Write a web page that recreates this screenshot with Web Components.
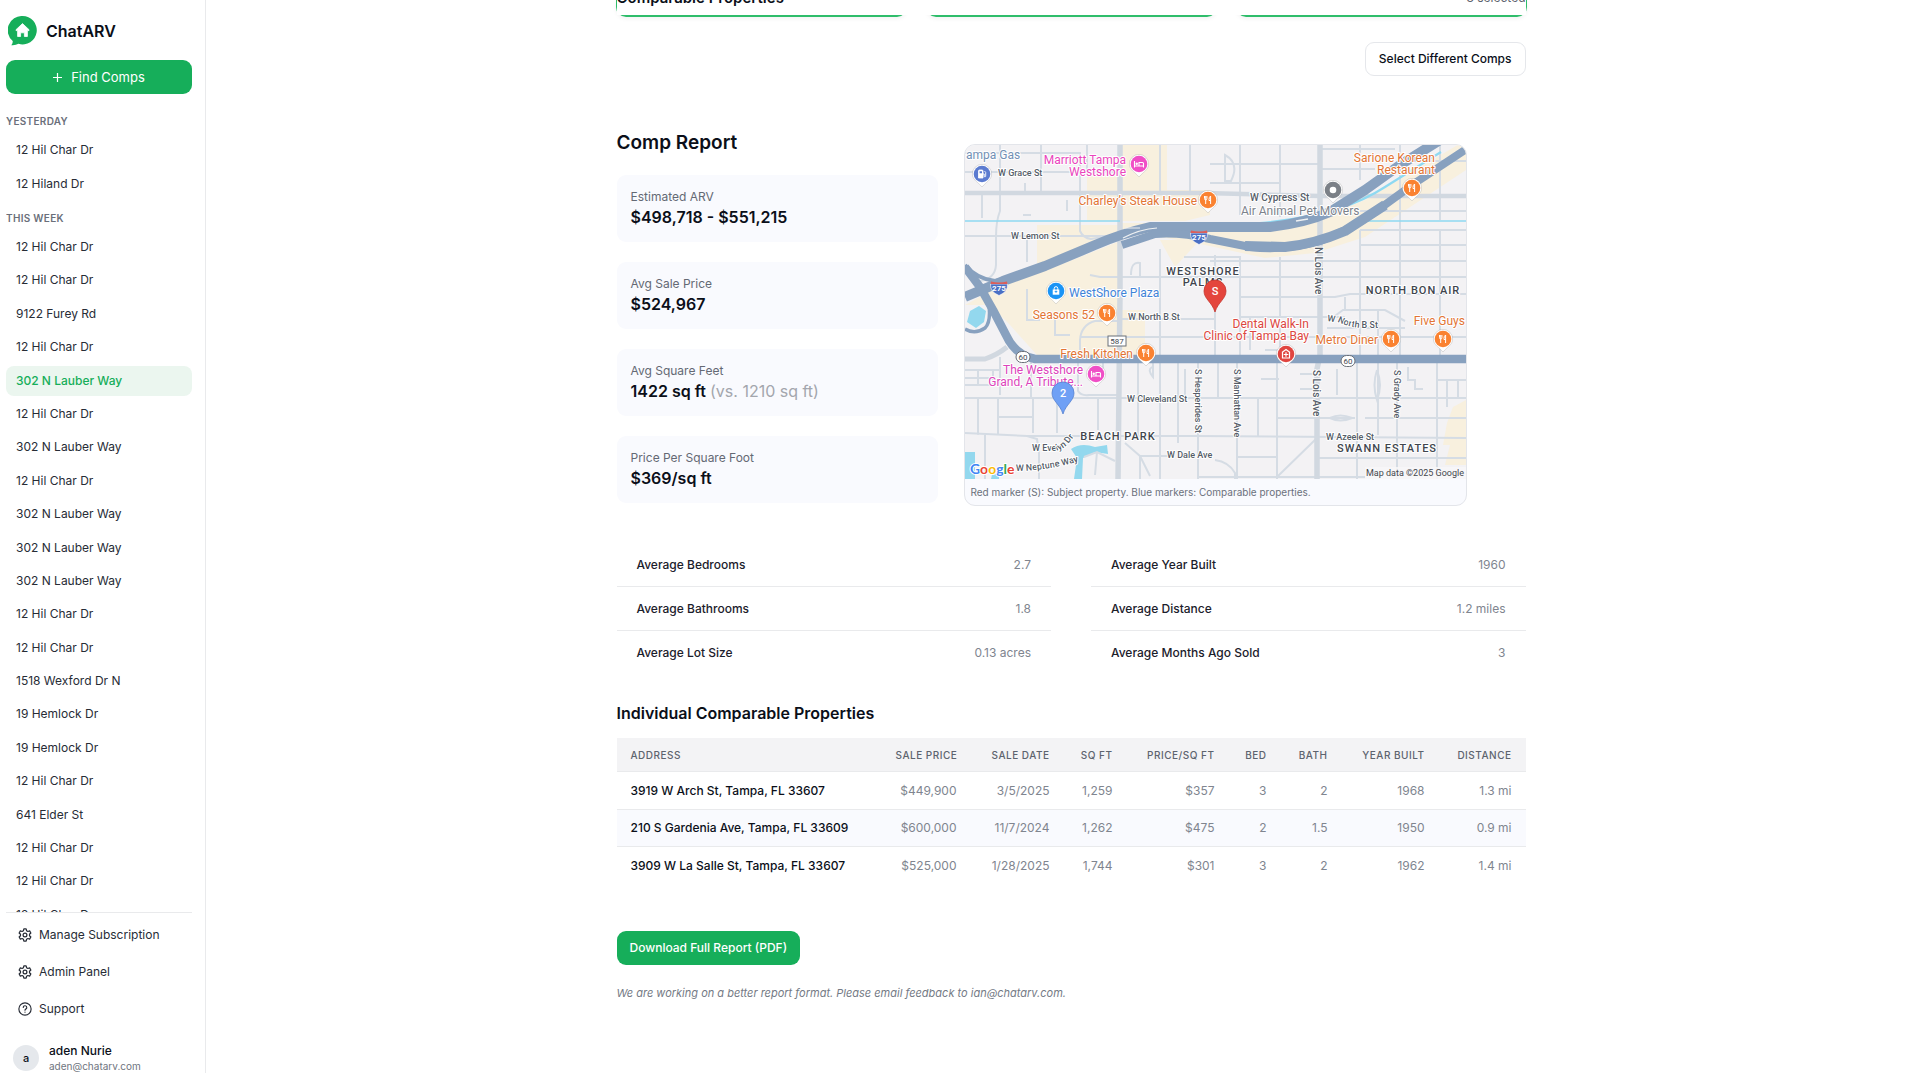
<!DOCTYPE html>
<html lang="en">
<head>
<meta charset="utf-8">
<title>ChatARV</title>
<style>
  html, body { height: 100%; margin: 0; }
  body {
    font-family: Inter, "Liberation Sans", sans-serif;
    font-size: 12px; line-height: 16px; color: #0b0f19; background: #fff;
    --green: #16ae5a; --line: #e9eaec; --muted: #80858f; --soft: #f9fafe; --ink: #272c36;
  }
</style>
</head>
<body>
<chat-app></chat-app>
<script>
const define = (name, html, ready) => {
  const tpl = document.createElement('template');
  tpl.innerHTML = '<style>*{box-sizing:border-box}button{font:inherit;cursor:pointer}a{color:inherit;text-decoration:none}</style>' + html;
  customElements.define(name, class extends HTMLElement {
    constructor() {
      super();
      this.attachShadow({ mode: 'open' }).append(tpl.content.cloneNode(true));
    }
    connectedCallback() { if (ready) ready.call(this, this.shadowRoot); }
  });
};

/* ---------- sidebar ---------- */
define('brand-logo', `
<style>
  :host { display: flex; align-items: center; gap: 9px; padding: 0 2px; height: 30px; font-size: 16px; line-height: 24px; font-weight: 600; }
  svg { width: 29px; height: 30px; flex: none; }
</style>
<svg viewBox="0 0 29 30" aria-hidden="true">
  <path d="M14.500 0A14.200 14.200 0 1 1 10.500 27.800Q7.500 29.600 3.300 29.200Q5 27.300 4.700 25A14.200 14.200 0 0 1 14.500 0Z" fill="#16ae5a"/>
  <path d="M14.500 7.600 21 13.700V14.600H19.400V20.500H16.400V16.800H12.600V20.500H9.600V14.600H8V13.700Z" fill="#fff" stroke="#fff" stroke-width=".8" stroke-linejoin="round"/>
</svg>
<slot></slot>`);

define('nav-group', `
<style>
  :host { display: block; }
  h2 { margin: 0; font-size: 10px; line-height: 16px; font-weight: 600; letter-spacing: .3px; color: #6a6f7a; text-transform: uppercase; }
  ul { list-style: none; margin: 6px 0 0; padding: 0; display: flex; flex-direction: column; justify-content: space-between; height: var(--list-height); }
  a { display: block; padding: 7px 10px; height: 30px; border-radius: 8px; color: var(--ink); }
  a[aria-current] { background: #ebf6ef; color: var(--green); font-weight: 500; }
</style>
<h2></h2><ul></ul>`, function (root) {
  root.querySelector('h2').textContent = this.getAttribute('heading');
  const ul = root.querySelector('ul');
  this.getAttribute('items').split('|').forEach(t => {
    const li = document.createElement('li'), a = document.createElement('a');
    a.href = '#';
    a.textContent = t.replace('*', '');
    if (t.startsWith('*')) a.setAttribute('aria-current', 'page');
    li.append(a); ul.append(li);
  });
});

define('footer-link', `
<style>
  :host { display: block; }
  a { display: flex; align-items: center; gap: 7px; height: 32px; padding: 0 12px; color: var(--ink); }
  ::slotted(svg) { width: 14px; height: 14px; flex: none; }
</style>
<a href="#"><slot name="icon"></slot><span><slot></slot></span></a>`);

const gear = `<svg slot="icon" viewBox="1 1 22 22" fill="none" stroke="currentColor" stroke-width="1.900" stroke-linecap="round" stroke-linejoin="round" aria-hidden="true"><path d="M10.200 2.500H13.800L14.500 5.300 16.500 6.500 19.300 5.600 21.200 8.800 19.100 10.900V13.100L21.200 15.200 19.300 18.400 16.500 17.500 14.500 18.700 13.800 21.500H10.200L9.500 18.700 7.500 17.500 4.700 18.400 2.800 15.200 4.900 13.100V10.900L2.800 8.800 4.700 5.600 7.500 6.500 9.500 5.300Z"/><circle cx="12" cy="12" r="3"/></svg>`;

define('app-sidebar', `
<style>
  :host { display: flex; flex-direction: column; width: 206px; flex: none; height: 100%; border-right: 1px solid var(--line); padding: 16px 13px 0 6px; }
  .new { margin-top: 14px; height: 34px; flex: none; border: 0; border-radius: 9px; background: var(--green); color: #fff; font-size: 13px; display: flex; align-items: center; justify-content: center; gap: 9px; padding: 0; }
  .new svg { width: 9px; height: 9px; }
  nav { flex: 1; min-height: 0; overflow: hidden; padding-top: 19px; display: flex; flex-direction: column; gap: 11px; }
  nav-group { flex: none; }
  .foot { border-top: 1px solid var(--line); padding-top: 6px; display: flex; flex-direction: column; gap: 5px; }
  .user { display: flex; align-items: center; gap: 10px; padding: 13px 7px 0; height: 43px; }
  .avatar { width: 26px; height: 26px; border-radius: 50%; background: #e5e8ec; display: grid; place-items: center; font-size: 11px; font-weight: 500; }
  .who { display: flex; flex-direction: column; }
  .who b { font-weight: 500; line-height: 16px; }
  .who span { font-size: 10px; line-height: 14px; color: #6f7580; }
</style>
<brand-logo>ChatARV</brand-logo>
<button class="new"><svg viewBox="0 0 9 9" stroke="#fff" stroke-width="1.200" aria-hidden="true"><path d="M4.500 0V9M0 4.500H9"/></svg>Find Comps</button>
<nav aria-label="History">
  <nav-group style="--list-height:64px" heading="Yesterday" items="12 Hil Char Dr|12 Hiland Dr"></nav-group>
  <nav-group style="--list-height:698px" heading="This week" items="12 Hil Char Dr|12 Hil Char Dr|9122 Furey Rd|12 Hil Char Dr|*302 N Lauber Way|12 Hil Char Dr|302 N Lauber Way|12 Hil Char Dr|302 N Lauber Way|302 N Lauber Way|302 N Lauber Way|12 Hil Char Dr|12 Hil Char Dr|1518 Wexford Dr N|19 Hemlock Dr|19 Hemlock Dr|12 Hil Char Dr|641 Elder St|12 Hil Char Dr|12 Hil Char Dr|12 Hil Char Dr"></nav-group>
</nav>
<div class="foot">
  <footer-link>${gear}Manage Subscription</footer-link>
  <footer-link>${gear}Admin Panel</footer-link>
  <footer-link><svg slot="icon" viewBox="0 0 24 24" fill="none" stroke="currentColor" stroke-width="2" stroke-linecap="round" aria-hidden="true"><circle cx="12" cy="12" r="10.500"/><path d="M9 9.200a3 3 0 0 1 6 .5c0 2-3 2.400-3 4.300M12 17.400v.1"/></svg>Support</footer-link>
  <div class="user"><span class="avatar">a</span><div class="who"><b>aden Nurie</b><span>aden@chatarv.com</span></div></div>
</div>`);

/* ---------- selected comps strip ---------- */
define('comps-strip', `
<style>
  :host { display: block; position: relative; margin: 0 -1px; }
  .cards { display: grid; grid-template-columns: repeat(3, 1fr); gap: 19px; }
  .card { height: 17px; border: 2px solid #2fbd6b; border-top: 0; border-radius: 0 0 10px 10px; box-shadow: 0 2px 4px #0000000d; }
  header { position: absolute; inset: 0 1px auto; height: 15px; background: #fff; display: flex; justify-content: space-between; align-items: flex-end; padding-bottom: 8px; }
  h2 { margin: 0; font-size: 15px; line-height: 18px; font-weight: 600; }
  span { line-height: 18px; color: #5b616c; }
</style>
<div class="cards"><div class="card"></div><div class="card"></div><div class="card"></div></div>
<header><h2>Comparable Properties</h2><span>3 selected</span></header>`);

/* ---------- report ---------- */
define('stat-card', `
<style>
  :host { display: block; height: 67px; padding: 14px; background: var(--soft); border-radius: 9px; }
  .label { color: #646974; line-height: 16px; }
  .value { font-size: 16px; line-height: 24px; font-weight: 600; }
  ::slotted(em) { font-style: normal; font-weight: 400; color: #a3a6ad; }
</style>
<div class="label"><slot name="label"></slot></div>
<div class="value"><slot></slot></div>`);

define('average-list', `
<style>
  :host { display: block; }
  dl { margin: 0; }
  div { display: flex; justify-content: space-between; padding: 14px 20px 13px; border-bottom: 1px solid var(--line); }
  div:last-child { border: 0; }
  dt { font-weight: 500; color: #1b202b; } dd { margin: 0; color: var(--muted); }
</style><dl></dl>`, function (root) {
  root.querySelector('dl').innerHTML = this.getAttribute('rows').split('|')
    .map(r => r.split(':')).map(([k, v]) => `<div><dt>${k}</dt><dd>${v}</dd></div>`).join('');
});

const rows = [
  ['3919 W Arch St, Tampa, FL 33607', '$449,900', '3/5/2025', '1,259', '$357', '3', '2', '1968', '1.3 mi'],
  ['210 S Gardenia Ave, Tampa, FL 33609', '$600,000', '11/7/2024', '1,262', '$475', '2', '1.5', '1950', '0.9 mi'],
  ['3909 W La Salle St, Tampa, FL 33607', '$525,000', '1/28/2025', '1,744', '$301', '3', '2', '1962', '1.4 mi']
];
define('comps-table', `
<style>
  :host { display: block; }
  table { width: 100%; table-layout: fixed; border-collapse: separate; border-spacing: 0; }
  th, td { padding: 0 14px; text-align: right; white-space: nowrap; }
  thead th { height: 34px; background: #f3f3f5; border-bottom: 1px solid var(--line); color: #5d636e; font-size: 10px; font-weight: 500; letter-spacing: .5px; text-transform: uppercase; }
  tbody th, tbody td { height: 38px; color: var(--muted); border-bottom: 1px solid var(--line); }
  tbody tr:nth-child(2) > * { background: var(--soft); height: 37px; }
  tbody tr:last-child > * { border: 0; }
  th:first-child { text-align: left; }
  tbody th { font-weight: 500; color: #0b0f19; }
</style>
<table>
  <colgroup>${[265, 89, 93, 63, 102, 52, 61, 97, 87].map(w => `<col style="width:${w}px">`).join('')}</colgroup>
  <thead><tr>${['Address', 'Sale price', 'Sale date', 'Sq ft', 'Price/sq ft', 'Bed', 'Bath', 'Year built', 'Distance'].map(h => `<th scope="col">${h}</th>`).join('')}</tr></thead>
  <tbody>${rows.map(r => `<tr><th scope="row">${r[0]}</th>${r.slice(1).map(c => `<td>${c}</td>`).join('')}</tr>`).join('')}</tbody>
</table>`);

/* ---------- map ---------- */
const glyph = {
  fork: '<path d="M-3.500-4V-1.500Q-3.500 0-2.300 0V4M-1.100-4V-1.500Q-1.100 0-2.300 0V-4M2.600 4V-4Q1-3 1-.5V.5H2.600" fill="none" stroke="#fff" stroke-width="1"/>',
  bed: '<path d="M-4.500-3V3.500M-4.500 2H4.500V3.500M4.500 2V-.5Q4.500-1.500 3.500-1.500H0V2" fill="none" stroke="#fff" stroke-width="1.100"/><circle cx="-2.300" cy="-.3" r="1.200" fill="#fff"/>',
  gas: '<path d="M-3.500 4V-3Q-3.500-4-2.500-4H0Q1-4 1-3V4Z" fill="#fff" stroke="#fff" stroke-width=".8"/><path d="M1 0H2.200V2.500Q3.300 3.500 3.700 2.300V-1.500L2.500-3" fill="none" stroke="#fff" stroke-width=".9"/><path d="M-2.400-2.800H0V-.8H-2.400Z" fill="#5b7bd0"/>',
  bag: '<path d="M-3.300-1.500H3.300V3.700H-3.300Z" fill="#fff"/><path d="M-1.800-1V-2.700Q-1.800-4.300 0-4.300T1.800-2.700V-1" fill="none" stroke="#fff"/><path d="M-1.300.5H1.300M0-.5V2" stroke="#1a94f5" stroke-width=".8"/>',
  dot: '<circle r="3.300" fill="#fff"/>',
  cross: '<path d="M-4-1.500 0-4.500 4-1.500M-3.500-1.500V4H3.500V-1.500M0-1.800V2.800M-2.300.5H2.300" fill="none" stroke="#fff" stroke-width="1.200"/>'
};
const pin = (x, y, c, g) => `<g transform="translate(${x} ${y})"><path d="M-9.600 0A9.600 9.600 0 1 1 9.600 0C9.600 6 4 8 0 13C-4 8-9.600 6-9.600 0Z" fill="#fff" stroke="#0003" stroke-width=".6"/><circle r="8.300" fill="${c}"/>${glyph[g]}</g>`;
const big = (x, y, c, s, t) => `<g transform="translate(${x} ${y})"><path d="M-11-1A11 11 0 1 1 11-1C11 7 3 10 0 20C-3 10-11 7-11-1Z" fill="${c}" stroke="${s}" stroke-width=".8"/><text class="plain" y="3" text-anchor="middle" font-size="11" font-weight="500" fill="#fff">${t}</text></g>`;
const i275 = (x, y) => `<g transform="translate(${x} ${y})"><path d="M-8.500-4H8.500Q9 4 0 7.500Q-9 4-8.500-4Z" fill="#4a6fc4" stroke="#fff" stroke-width=".6"/><path d="M-8-6.500Q0-4.500 8-6.500L8.500-4H-8.500Z" fill="#dc5f5a"/><text class="plain" y="3" text-anchor="middle" font-size="8" font-weight="700" fill="#fff">275</text></g>`;
const r60 = (x, y) => `<g transform="translate(${x} ${y})"><rect x="-7" y="-5.500" width="14" height="11" rx="5.500" fill="#fff" stroke="#6b7078"/><text class="plain" y="3" text-anchor="middle" font-size="8" fill="#444950">60</text></g>`;
const orange = '#e27434', pink = '#ea45bd', road = '#555d68', area = '#40454d', red = '#dc4640';
const t = (x, y, s, c, size, anchor = 'start', more = '') => `<text x="${x}" y="${y}" fill="${c}" font-size="${size}" text-anchor="${anchor}" ${more}>${s}</text>`;
const st = (x, y, s, size = 9) => t(x, y, s, road, size, 'start', 'font-weight="500"');
const vert = (x, y, s, size = 9) => `<text transform="translate(${x} ${y}) rotate(90)" fill="${road}" font-size="${size}" font-weight="500">${s}</text>`;
const ar = (x, y, s) => t(x, y, s, area, 11, 'middle', 'font-weight="500" letter-spacing="1"');

define('area-map', `
<style>
  :host { display: block; border: 1px solid #e3e5ea; border-radius: 11px; overflow: hidden; background: var(--soft); }
  svg { display: block; width: 100%; height: auto; font-family: Roboto, "Liberation Sans", sans-serif; }
  text { paint-order: stroke; stroke: #fff; stroke-width: 2px; stroke-linejoin: round; }
  text.plain { stroke: none; }
  p { margin: 0; padding: 6px; font-size: 10px; line-height: 14px; color: #6b717c; }
</style>
<svg viewBox="0 0 501 334" role="img" aria-label="Map of comparable properties">
  <rect width="501" height="334" fill="#f3f2f4"/>
  <g fill="#f8f0de">
    <path d="M157 0H202V45H245V70L220 76H157ZM122 30H153V76H122ZM72 80H154V92L72 125Z"/>
    <path d="M0 160 40 138 100 118 155 96V165H180V210H72L45 180 25 160H0Z"/>
    <path d="M195 95H235L210 122ZM157 78 300 78 350 75 400 55 501-5V25L400 92 350 108 300 113 240 100 157 85Z"/>
    <path d="M488 262 501 255V320H480L485 300H478L482 278Z"/>
  </g>
  <g fill="#93d8ee">
    <path d="M5 166 14 161 21 166 19 177 11 183 2 177Z"/>
    <path d="M0 307H10V334H0ZM106 304Q116 297 130 302L142 300 143 309 130 307 118 313 117 334H109L112 313Z"/>
    <path d="M28 325H34V334H26Z"/>
  </g>
  <g fill="none" stroke="#d5dce4" stroke-width="2">
    <path d="M0 8H115V86Q118 93 126 94L155 89M0 27H155M76 0V48M35 0V48M17 48V73M0 91H155M35 48V66Q31 76 31 92V120Q30 134 15 136M60 38V50M58 70H66M62 91V117M102 55V66M195 0V48M225 0V48M122 0V27M155 132H501M125 130 135 132H155M250 110V212M219 112H275V132M175 132V118Q166 116 166 130M195 104V212"/>
    <path d="M275 0V70M315 0V72M245 19H355M245 38H315M395 0V35M435 0V108M475 0V75M355 4H430M355 24H410M395 66H501M448 16H501M395 85H501M395 100H501M355 116H501M395 85V212M435 85V212M475 85V212M245 116H355M275 112V212M315 112V212M275 152H370L385 149H501M275 172H380M260 10Q275 18 266 36H260Z"/>
    <path d="M115 212V195Q116 180 130 176H155M115 192H153M62 144V175H75M90 173V190H105M155 174H250M155 192H250M195 174V320M213 212V298M173 212V295M138 212V226M250 192H360M363 176 378 165H420L440 176M373 192H501M413 165V212M380 152V165M362 183H440M285 172V205M300 205H330"/>
    <path d="M0 253H501M0 288 62 291H230L501 293M13 253V290M33 253V290M68 253V288M92 253V288M113 212V246Q116 251 124 250H153M133 253V285M20 290V334M62 291 72 294 74 308V334M33 272H68M35 225H0M28 225V240H0M13 225V240M35 212V250M0 233H28M66 212V253"/>
    <path d="M220 224V253M233 212V334M253 218V253M272 212V334M293 253V291M312 212V334M392 212V334M413 212V290M432 212V334M472 212V334M312 273H390M400 273H501M272 312H312M352 313H501M272 332H400M313 331 352 293M472 235H501M493 235V253M482 235V262M250 315Q264 317 270 328V334M233 332H272M296 234H314M335 229H350M335 244H350M372 224V250M412 225Q407 240 412 255Q418 240 412 225M365 273Q375 268 387 273Q375 278 365 273M443 222V235H450V244H458M188 210V232Q182 225 187 222M160 298 175 311H204M175 311V334M175 311 185 331M119 312 132 307 150 316M132 307 130 330M195 318V334"/>
  </g>
  <g fill="none" stroke="#d1d8e0">
    <path d="M0 48H240L355 51H501" stroke-width="4.500"/>
    <path d="M155 0V150L153 334M355 0V210L352 224V334" stroke-width="5.500"/>
    <path d="M0 214H20Q32 210 42 202" stroke-width="5"/>
  </g>
  <g fill="none" stroke="#8ed9f1" stroke-width="1.500">
    <path d="M0 76H155M395 76H501" /><path d="M295 78Q340 74 375 63 400 55 420 42L476 7" stroke-width="2.200"/>
  </g>
  <g fill="none" stroke="#88a1bf" stroke-linejoin="round">
    <path d="M0 152 38 136 80 121 130 100Q155 89 185 82H305Q340 78 365 67L400 45 435 20 475-5" stroke-width="10"/>
    <path d="M157 100 190 89Q215 87 245 94L285 102Q320 106 355 96 385 85 410 67L450 38 503 3" stroke-width="8"/>
    <path d="M280 101 320 102Q350 99 380 86L420 60" stroke-width="10"/>
    <path d="M0 120Q12 134 30 136L45 133" stroke-width="4"/>
    <path d="M0 122 15 142 28 165 41 190Q50 210 70 214H501" stroke-width="8.500"/>
    <path d="M0 184Q10 190 20 183 26 177 24 160" stroke-width="3.500"/>
  </g>
  <g fill="none" stroke="#eef0f2"><path d="M158 93Q175 84 192 83M160 83H175" stroke-width="1.200"/><path d="M331 76 343 74" stroke-width="1.500"/></g>
  ${i275(34, 143)}${i275(234, 92)}${r60(58, 212)}${r60(383, 216)}
  <rect x="143" y="191" width="18" height="10" fill="#fff" stroke="#6b7078"/>${t(152, 199, '587', '#444950', 8, 'middle', 'class="plain"')}
  ${t(1, 14, 'ampa Gas', '#7290b5', 12)}${st(33, 31, 'W Grace St')}
  ${t(161, 19, 'Marriott Tampa', pink, 12, 'end')}${t(161, 31, 'Westshore', pink, 12, 'end')}
  ${t(232, 60, 'Charley’s Steak House', orange, 12, 'end')}
  ${st(46, 94, 'W Lemon St')}${st(285, 56, 'W Cypress St', 10)}
  ${t(276, 70, 'Air Animal Pet Movers', '#7c828b', 12)}
  ${t(470, 17, 'Sarione Korean', orange, 12, 'end')}${t(470, 29, 'Restaurant', orange, 12, 'end')}
  ${ar(238, 130, 'WESTSHORE')}${ar(238, 141, 'PALMS')}${ar(448, 149, 'NORTH BON AIR')}${ar(153, 295, 'BEACH PARK')}${ar(422, 307, 'SWANN ESTATES')}
  ${vert(350, 102, 'N Lois Ave', 10)}${vert(230, 224, 'S Hesperides St')}${vert(269, 224, 'S Manhattan Ave')}${vert(348, 225, 'S Lois Ave', 10)}${vert(429, 225, 'S Grady Ave')}
  ${t(104, 152, 'WestShore Plaza', '#3f83d8', 12)}${t(130, 174, 'Seasons 52', orange, 12, 'end')}
  ${st(163, 175, 'W North B St')}${t(168, 213, 'Fresh Kitchen', orange, 12, 'end')}
  ${t(118, 229, 'The Westshore', '#dc43bb', 12, 'end')}${t(118, 241, 'Grand, A Tribute...', '#dc43bb', 12, 'end')}
  ${st(162, 257, 'W Cleveland St')}${st(202, 313, 'W Dale Ave')}${st(361, 295, 'W Azeele St')}
  <path id="evelyn" d="M67 306H90Q98 305 104 298L118 280" fill="none"/><path id="neptune" d="M51 326Q85 326 125 313" fill="none"/><path id="northb" d="M362 176 375 178Q384 182 395 183H430" fill="none"/>
  <text fill="${road}" font-size="9" font-weight="500"><textPath href="#evelyn">W Evelyn Dr</textPath></text>
  <text fill="${road}" font-size="9" font-weight="500"><textPath href="#neptune">W Neptune Way</textPath></text>
  <text fill="${road}" font-size="9" font-weight="500"><textPath href="#northb">W North B St</textPath></text>
  ${t(344, 183, 'Dental Walk-In', red, 12, 'end')}${t(344, 195, 'Clinic of Tampa Bay', red, 12, 'end')}
  ${t(413, 199, 'Metro Diner', orange, 12, 'end')}${t(500, 180, 'Five Guys', orange, 12, 'end')}
  ${pin(17, 29, '#5b7bd0', 'gas')}${pin(174, 19, '#f04fc6', 'bed')}${pin(243, 55, '#fa8231', 'fork')}${pin(91, 146, '#1a94f5', 'bag')}${pin(142, 168, '#fa8231', 'fork')}
  ${pin(368, 45, '#7b8087', 'dot')}${pin(447, 43, '#fa8231', 'fork')}${pin(181, 208, '#fa8231', 'fork')}${pin(131, 229, '#f04fc6', 'bed')}${pin(321, 209, '#e04540', 'cross')}${pin(426, 194, '#fa8231', 'fork')}${pin(478, 194, '#fa8231', 'fork')}
  ${big(250, 147, '#e4453c', '#c5362f', 'S')}${big(98, 249, '#6fa0f5', '#5682d0', '2')}
  <text x="5" y="329" font-family="Lato" font-size="14" font-weight="700"><tspan fill="#4285f4">G</tspan><tspan fill="#ea4335">o</tspan><tspan fill="#fbbc05">o</tspan><tspan fill="#4285f4">g</tspan><tspan fill="#34a853">l</tspan><tspan fill="#ea4335">e</tspan></text>
  <rect x="400" y="322" width="101" height="12" fill="#f7f7f8" opacity=".85"/>
  ${t(499, 331, 'Map data ©2025 Google', '#44484e', 9, 'end', 'class="plain"')}
</svg>
<p><slot></slot></p>`);

define('comp-report', `
<style>
  :host { display: flex; flex-direction: column; width: 100%; max-width: 909px; }
  h1, h2 { margin: 0; font-weight: 600; }
  h1 { font-size: 19px; line-height: 28px; }
  h2 { font-size: 16px; line-height: 24px; margin: 27px 0 13px; }
  button { height: 34px; padding: 0 13px; border-radius: 9px; font-weight: 500; }
  .select { align-self: flex-end; margin-top: 25px; background: #fff; border: 1px solid #e5e7eb; color: #0b0f19; }
  .overview { display: flex; gap: 26px; margin-top: 53px; }
  .figures { flex: 0 1 321px; display: flex; flex-direction: column; gap: 20px; }
  .figures h1 { margin-bottom: -2px; }
  area-map { flex: 0 1 503px; margin-top: 15px; align-self: flex-start; }
  .averages { display: grid; grid-template-columns: 1fr 1fr; gap: 40px; margin-top: 37px; }
  .download { align-self: flex-start; margin-top: 46px; background: var(--green); border: 0; color: #fff; }
  .note { margin: 20px 0 0; font-size: 11px; font-style: italic; color: #747a85; }
</style>
<comps-strip></comps-strip>
<button class="select">Select Different Comps</button>
<section class="overview">
  <div class="figures">
    <h1>Comp Report</h1>
    <stat-card><span slot="label">Estimated ARV</span>$498,718 - $551,215</stat-card>
    <stat-card><span slot="label">Avg Sale Price</span>$524,967</stat-card>
    <stat-card><span slot="label">Avg Square Feet</span>1422 sq ft <em>(vs. 1210 sq ft)</em></stat-card>
    <stat-card><span slot="label">Price Per Square Foot</span>$369/sq ft</stat-card>
  </div>
  <area-map>Red marker (S): Subject property. Blue markers: Comparable properties.</area-map>
</section>
<section class="averages">
  <average-list rows="Average Bedrooms:2.7|Average Bathrooms:1.8|Average Lot Size:0.13 acres"></average-list>
  <average-list rows="Average Year Built:1960|Average Distance:1.2 miles|Average Months Ago Sold:3"></average-list>
</section>
<h2>Individual Comparable Properties</h2>
<comps-table></comps-table>
<button class="download">Download Full Report (PDF)</button>
<p class="note">We are working on a better report format. Please email feedback to ian@chatarv.com.</p>`);

define('chat-app', `
<style>
  :host { display: flex; height: 100vh; overflow: hidden; }
  main { flex: 1; min-width: 0; overflow: hidden; display: flex; justify-content: center; align-items: flex-start; padding-left: 16px; }
</style>
<app-sidebar></app-sidebar>
<main><comp-report></comp-report></main>`);
</script>
</body>
</html>
